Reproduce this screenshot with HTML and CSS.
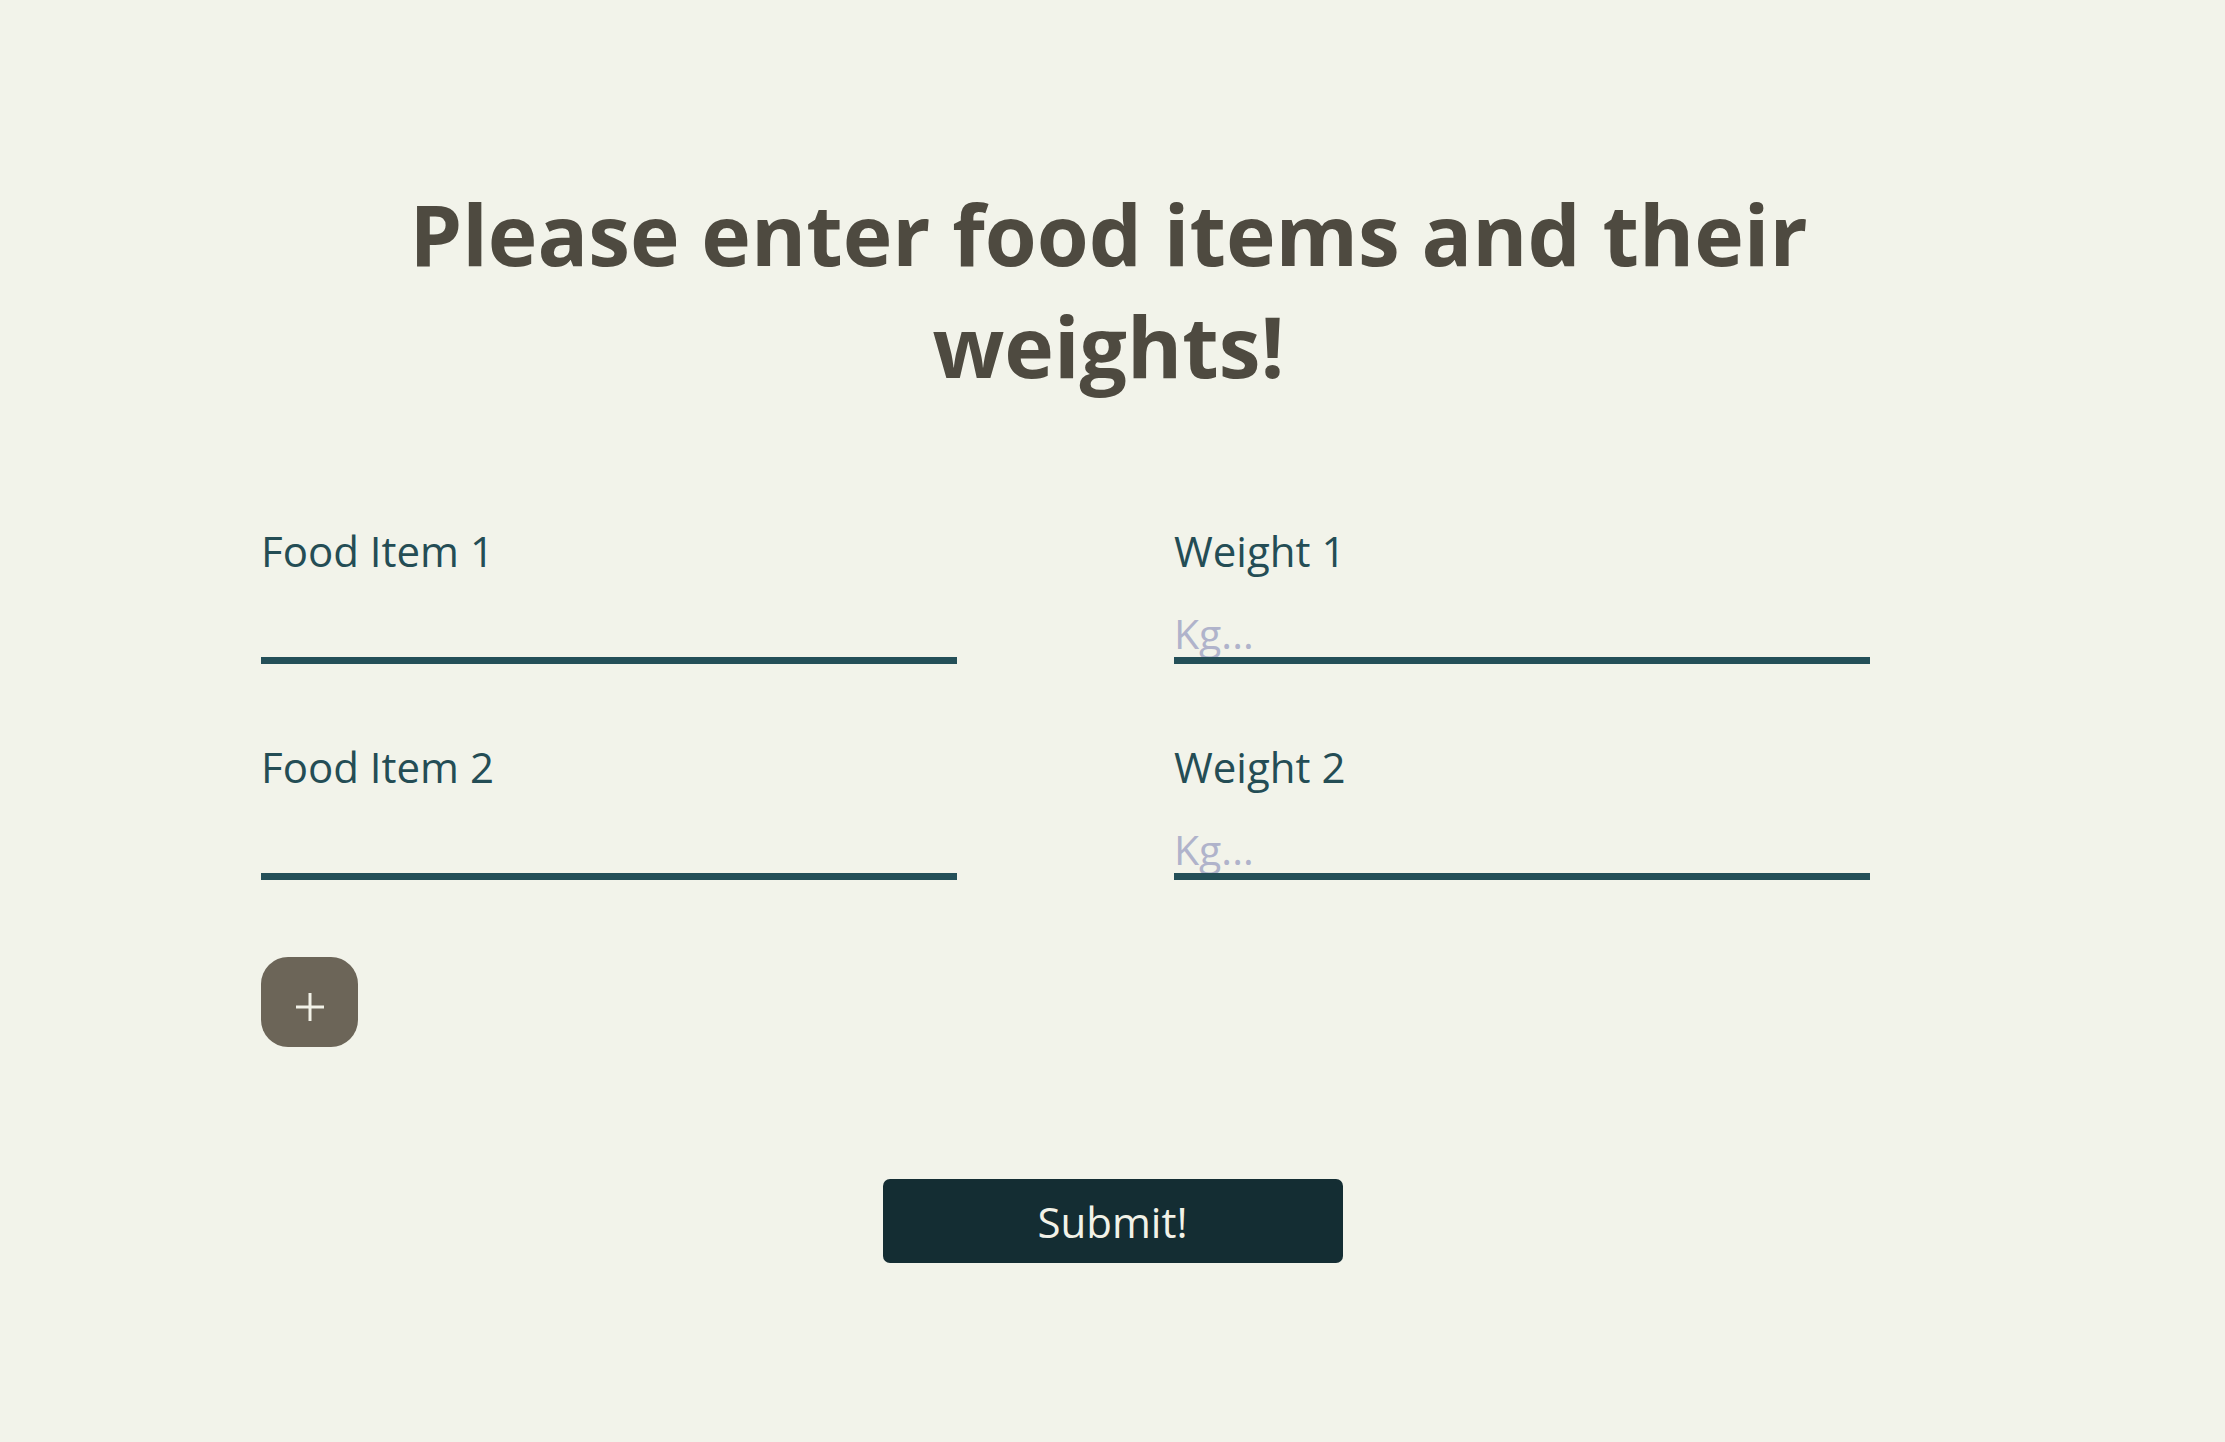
FILE: index.html
```html
<!DOCTYPE html>
<html lang="en">
<head>
<meta charset="utf-8">
<title>Food weights</title>
<link rel="stylesheet" href="styles.css">
</head>
<body>
<main class="page">
  <h1 class="title">Please enter food items and their weights!</h1>
  <form class="form">
    <div class="fields">
      <div class="grid">
        <div class="field">
          <label class="label" for="f1">Food Item 1</label>
          <input class="input" id="f1" type="text">
        </div>
        <div class="field">
          <label class="label" for="w1">Weight 1</label>
          <input class="input" id="w1" type="text" placeholder="Kg...">
        </div>
        <div class="field">
          <label class="label" for="f2">Food Item 2</label>
          <input class="input" id="f2" type="text">
        </div>
        <div class="field">
          <label class="label" for="w2">Weight 2</label>
          <input class="input" id="w2" type="text" placeholder="Kg...">
        </div>
      </div>
      <button class="add" type="button" aria-label="Add item">
        <svg class="plus" width="28" height="28" viewBox="0 0 28 28" aria-hidden="true">
          <path d="M14 0V28M0 14H28" stroke="#f2f2e8" stroke-width="3" fill="none"/>
        </svg>
      </button>
    </div>
    <div class="actions">
      <button class="submit" type="submit">Submit!</button>
    </div>
  </form>
</main>
</body>
</html>
```
FILE: styles.css
```css
html, body {
  margin: 0;
  padding: 0;
  background: #f2f3ea;
}

body {
  font-family: "Open Sans", "Liberation Sans", sans-serif;
}

.page {
  padding-top: 178px;
  display: flex;
  flex-direction: column;
}

.title {
  margin: 0 auto;
  width: 1500px;
  text-align: center;
  font-size: 84px;
  line-height: 112px;
  font-weight: 700;
  color: #4e4a40;
  position: relative;
  left: -4px;
}

.form {
  margin-top: 122px;
  display: flex;
  flex-direction: column;
}

.fields {
  padding-left: 261px;
  display: flex;
  flex-direction: column;
  align-items: flex-start;
}

.grid {
  display: grid;
  grid-template-columns: 696px 696px;
  column-gap: 217px;
  row-gap: 76px;
}

.field {
  display: flex;
  flex-direction: column;
}

.label {
  font-size: 42px;
  color: #244d55;
  line-height: 54px;
  margin-bottom: 30px;
}

.input {
  font-family: "Open Sans", "Liberation Sans", sans-serif;
  font-size: 41px;
  color: #244d55;
  background: transparent;
  border: none;
  border-bottom: 7px solid #244f58;
  padding: 0;
  margin: 0;
  height: 56px;
  box-sizing: border-box;
  outline: none;
  width: 100%;
}

.input::placeholder {
  color: #b0b3cb;
}

.add {
  margin-top: 77px;
  width: 97px;
  height: 90px;
  border: none;
  border-radius: 27px;
  background: #6c6558;
  padding: 10px 0 0 0;
  display: flex;
  align-items: center;
  justify-content: center;
}

.plus {
  display: block;
}

.actions {
  margin-top: 132px;
  display: flex;
  justify-content: center;
}

.submit {
  width: 460px;
  height: 84px;
  border: none;
  border-radius: 7px;
  background: #142d33;
  color: #f2f2e8;
  font-family: "Open Sans", "Liberation Sans", sans-serif;
  font-size: 42px;
  padding: 0;
}
```
